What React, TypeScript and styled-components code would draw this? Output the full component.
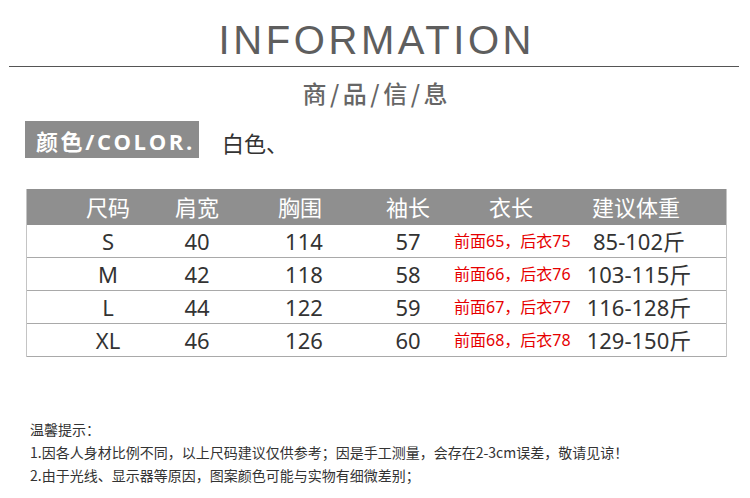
import React, {ReactElement} from 'react'
import styled, {createGlobalStyle} from 'styled-components'

const GlobalStyle = createGlobalStyle`
    body {
        margin: 0;
        background: #fff;
    }
`

const Page = styled.div`
    width: 750px;
    height: 498px;
    overflow: hidden;
    background: #fff;
    font-family: "Noto Sans", "Noto Sans CJK SC", sans-serif;
`

const Title = styled.h1`
    margin: 20px 0 0;
    font-family: "Liberation Sans", Arial, sans-serif;
    font-size: 40px;
    font-weight: 400;
    line-height: 40px;
    letter-spacing: 3.6px;
    padding-left: 3.6px;
    text-align: center;
    color: #5e5e5e;
`

const Rule = styled.div`
    height: 1px;
    margin: 6px 11px 0 9px;
    background: #555;
`

const SubTitle = styled.h2`
    margin: 14px 0 0;
    font-family: "Noto Sans CJK SC", sans-serif;
    font-size: 24px;
    font-weight: 500;
    line-height: 24px;
    letter-spacing: 3.5px;
    padding-left: 3.5px;
    text-align: center;
    color: #666;
`

const ColorRow = styled.div`
    display: flex;
    align-items: center;
    gap: 23px;
    margin: 16px 0 0 25px;
`

const ColorLabel = styled.div`
    display: flex;
    align-items: center;
    width: 174px;
    height: 37px;
    box-sizing: border-box;
    padding-left: 11px;
    background: #8c8c8c;
    color: #fff;
    font-family: "Open Sans", "Noto Sans CJK SC", sans-serif;
    font-size: 22px;
    font-weight: 700;
    letter-spacing: 2.6px;
    white-space: nowrap;
`

const ColorValue = styled.span`
    font-family: "Noto Sans CJK SC", sans-serif;
    font-size: 22px;
    color: #333;
    margin-top: 4px;
`

const Table = styled.div`
    margin: 31px 23px 0 26px;
    border-left: 1px solid #c4c4c4;
    border-right: 1px solid #c4c4c4;
`

const Row = styled.div<{$head?: boolean}>`
    display: grid;
    grid-template-columns: 88px 90px 116px 100px 106px 144px;
    align-items: center;
    box-sizing: border-box;
    padding-left: 37px;
    height: ${({$head}) => $head ? '36px' : '33px'};
    background: ${({$head}) => $head ? '#8f8f8f' : '#fff'};
    border-bottom: ${({$head}) => $head ? 'none' : '1px solid #a9a9a9'};
    color: ${({$head}) => $head ? '#fff' : '#333'};
    font-size: 22px;
    line-height: 1;
`

const Cell = styled.span<{$shift?: number}>`
    text-align: center;
    white-space: nowrap;
    transform: translateX(${({$shift}) => $shift || 0}px);
`

const RedCell = styled.span`
    text-align: center;
    white-space: nowrap;
    color: #e60000;
    font-size: 16px;
    transform: translateX(-4px);
`

const Notes = styled.div`
    margin: 61px 0 0 30px;
    font-family: "Noto Sans CJK SC", sans-serif;
    font-size: 14px;
    line-height: 23px;
    color: #333;
`

const heads = ['尺码', '肩宽', '胸围', '袖长', '衣长', '建议体重']

const rows = [
    {size: 'S', shoulder: '40', chest: '114', sleeve: '57', front: '65', back: '75', weight: '85-102斤'},
    {size: 'M', shoulder: '42', chest: '118', sleeve: '58', front: '66', back: '76', weight: '103-115斤'},
    {size: 'L', shoulder: '44', chest: '122', sleeve: '59', front: '67', back: '77', weight: '116-128斤'},
    {size: 'XL', shoulder: '46', chest: '126', sleeve: '60', front: '68', back: '78', weight: '129-150斤'},
]

export default function App(): ReactElement {
    return (
        <Page>
            <GlobalStyle/>
            <Title>INFORMATION</Title>
            <Rule/>
            <SubTitle>商/品/信/息</SubTitle>

            <ColorRow>
                <ColorLabel>颜色/COLOR.</ColorLabel>
                <ColorValue>白色、</ColorValue>
            </ColorRow>

            <Table>
                <Row $head>
                    {heads.map(h => <Cell key={h}>{h}</Cell>)}
                </Row>
                {rows.map(r => (
                    <Row key={r.size}>
                        <Cell>{r.size}</Cell>
                        <Cell>{r.shoulder}</Cell>
                        <Cell $shift={4}>{r.chest}</Cell>
                        <Cell>{r.sleeve}</Cell>
                        <RedCell>前面{r.front}，后衣{r.back}</RedCell>
                        <Cell $shift={3}>{r.weight}</Cell>
                    </Row>
                ))}
            </Table>

            <Notes>
                <div>温馨提示：</div>
                <div>1.因各人身材比例不同，以上尺码建议仅供参考；因是手工测量，会存在2-3cm误差，敬请见谅！</div>
                <div>2.由于光线、显示器等原因，图案颜色可能与实物有细微差别；</div>
            </Notes>
        </Page>
    )
}
